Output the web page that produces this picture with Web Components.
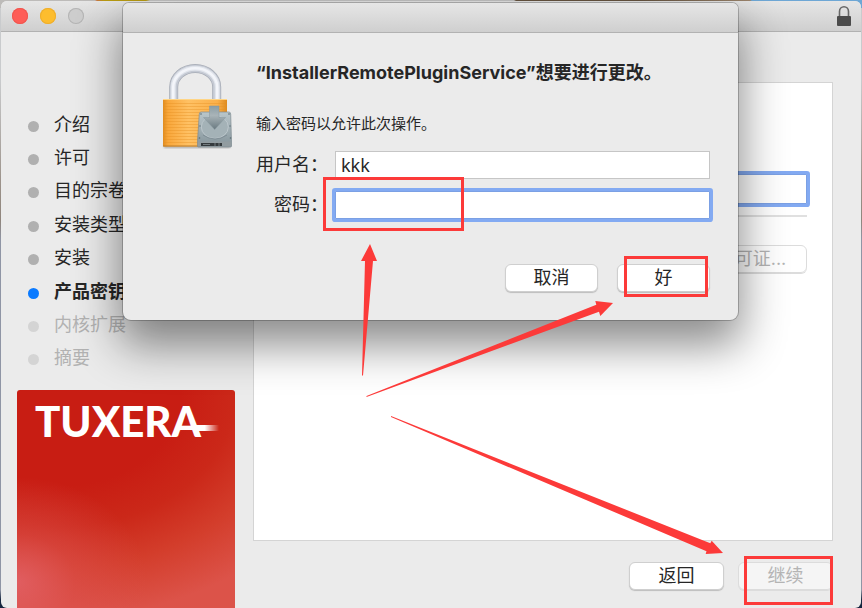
<!DOCTYPE html>
<html lang="zh-CN">
<head>
<meta charset="utf-8">
<title>安装器</title>
<style>
html, body { margin: 0; height: 100%; }
body {
  overflow: hidden;
  font-family: Inter, "Noto Sans CJK SC", sans-serif;
  font-size: 18px;
  color: #262626;
}
</style>
</head>
<body>
<installer-screen></installer-screen>
<script>
function define(name, html, setup) {
  const template = document.createElement('template');
  template.innerHTML = html;
  customElements.define(name, class extends HTMLElement {
    constructor() {
      super();
      this.attachShadow({ mode: 'open' }).append(template.content.cloneNode(true));
    }
    connectedCallback() { if (setup) setup(this, this.shadowRoot); }
  });
}

define('push-button', `
<style>
:host { display: block; min-width: 93px; }
button {
  display: block; box-sizing: border-box; width: 100%; height: 28px; padding: 0 17px;
  border: 1px solid #cfcfcf; border-radius: 6px; background: #fff;
  box-shadow: 0 1px 1px #bdbdbd;
  font: inherit; line-height: 26px; color: inherit; white-space: nowrap;
}
button:disabled { background: rgba(255,255,255,.5); color: #b4b4b4; border-color: #dcdcdc; box-shadow: 0 1px 0 #dcdcdc; }
</style>
<button type="button"><slot></slot></button>`, (host, root) => {
  root.querySelector('button').disabled = host.hasAttribute('disabled');
});

define('text-field', `
<style>
:host { display: grid; grid-template-columns: var(--label-width, auto) minmax(0, 1fr); column-gap: 7px; align-items: center; }
label { text-align: right; white-space: nowrap; line-height: 28px; }
label:empty { display: none; }
input {
  box-sizing: border-box; width: 100%; height: var(--field-height, 28px); padding: 0 5px; margin: 0;
  border: 1px solid #c6c6c6; border-radius: 0; background: #fff; outline: 0;
  font: 18px/24px "Noto Sans", "Noto Sans CJK SC", sans-serif; color: #262626;
}
:host([ring]) input { border-color: #7ba0e4; box-shadow: 0 0 0 3px #83aaf2; border-radius: 1px; }
:host([bare]) { grid-template-columns: minmax(0, 1fr); }
</style>
<label for="field"></label><input id="field">`, (host, root) => {
  const input = root.querySelector('input');
  root.querySelector('label').textContent = host.getAttribute('label') || '';
  input.type = host.getAttribute('type') || 'text';
  input.value = host.getAttribute('value') || '';
  if (host.hasAttribute('bare')) input.setAttribute('aria-label', host.getAttribute('name'));
});

define('title-bar', `
<style>
:host {
  display: flex; align-items: center; box-sizing: border-box; height: var(--bar-height, 30px);
  background: linear-gradient(#e6e6e6, #cfcfcf); border-bottom: 1px solid #b2b2b2;
}
</style><slot></slot>`);

define('window-controls', `
<style>
:host { display: flex; gap: 12px; padding-left: 11px; }
button { width: 16px; height: 16px; padding: 0; border: 0; border-radius: 50%; background: #fe5d57; box-shadow: 0 0 0 1px #f0564f inset; }
button:nth-of-type(2) { background: #fdbd2e; box-shadow: 0 0 0 1px #eeae2c inset; }
button:nth-of-type(3) { background: #cdcdcd; box-shadow: 0 0 0 1px #b4b4b4 inset; }
</style>
<button type="button" aria-label="关闭"></button><button type="button" aria-label="最小化"></button><button type="button" aria-label="缩放" disabled></button>`);

define('title-lock', `
<style>:host { display: block; margin-left: auto; padding-right: 10px; } svg { display: block; }</style>
<svg width="14" height="20" viewBox="0 0 14 20" aria-hidden="true">
  <path d="M2.500 11V5.500a4.500 4.700 0 0 1 9 0V11" fill="none" stroke="#666" stroke-width="1.600"/>
  <rect y="10" width="14" height="10" rx="1" fill="#4b4b4b"/>
</svg>`);

define('install-step', `
<style>
:host { display: flex; align-items: center; gap: 15px; flex: 1; white-space: nowrap; line-height: 24px; }
i { width: 11px; height: 11px; margin-top: 3px; border-radius: 50%; background: #b0b0b0; flex: none; }
:host([current]) { font-weight: 700; }
:host([current]) i { background: #0a7aff; }
:host([pending]) { color: #b2b2b2; }
:host([pending]) i { background: #d4d4d4; }
</style><i></i><span><slot></slot></span>`);

define('step-list', `
<style>:host { display: flex; flex-direction: column; min-height: 267px; padding-left: 11px; }</style><slot></slot>`);

define('brand-card', `
<style>
:host {
  display: block; flex: 1; border-radius: 3px 3px 0 0; padding: 5px 0 0 18px; overflow: hidden;
  background:
    radial-gradient(ellipse 130px 105px at 0 88%, rgba(226,98,104,.85), rgba(222,84,84,.45) 45%, rgba(220,80,70,0)),
    radial-gradient(ellipse 300px 228px at 20% 2%, #c81d13 40%, #cb2819 58%, #d33d2b 76%, #dc5349 98%);
}
.logo { position: relative; display: inline-block; font: 900 42px/52px Lato, sans-serif; color: #fff; }
.logo::after {
  content: ""; position: absolute; left: calc(100% - 8px); top: 30px; width: 26px; height: 6px;
  background: linear-gradient(90deg, #fff 45%, rgba(255,255,255,0));
}
</style><span class="logo"><slot></slot></span>`);

define('key-panel', `
<style>
:host { display: block; background: #fff; border: 1px solid #d4d4d4; padding: 91px 25px 0; }
hr { border: 0; height: 2px; background: #e0e0e0; margin: 11px 0 28px; }
text-field { --field-height: 30px; margin-left: 200px; }
.end { display: flex; justify-content: flex-end; }
</style>
<text-field bare ring name="产品密钥"></text-field>
<hr>
<div class="end"><push-button disabled>可证...</push-button></div>`);

define('lock-badge', `
<style>:host { display: block; } svg { display: block; }</style>
<svg width="85" height="100" viewBox="0 0 85 100" role="img" aria-label="锁">
  <defs>
    <linearGradient id="body" x2="1"><stop stop-color="#e08c20"/><stop offset=".08" stop-color="#f9a73b"/><stop offset=".4" stop-color="#ffc164"/><stop offset=".85" stop-color="#fbb04a"/><stop offset="1" stop-color="#de8b20"/></linearGradient>
    <linearGradient id="disk" x2="0" y2="1"><stop stop-color="#b9c6ca"/><stop offset="1" stop-color="#84939a"/></linearGradient>
    <linearGradient id="arrow" x2="0" y2="1"><stop stop-color="#8b9da4"/><stop offset=".4" stop-color="#a9b4b8"/><stop offset="1" stop-color="#697980"/></linearGradient>
    <pattern id="ribs" width="4" height="3" patternUnits="userSpaceOnUse"><rect width="4" height="1" fill="#e48f20" opacity=".38"/></pattern>
    <filter id="soft"><feGaussianBlur stdDeviation="1"/></filter>
  </defs>
  <path d="M18.700 46V32a21.500 18.500 0 0 1 43 0V46" fill="none" stroke="#a6abb5" stroke-width="9"/>
  <path d="M18.700 46V32a21.500 18.500 0 0 1 43 0V46" fill="none" stroke="#c4c9d3" stroke-width="7.600"/>
  <path d="M18.200 46V32a22 18.800 0 0 1 44 0V46" fill="none" stroke="#e0e4eb" stroke-width="5"/>
  <path d="M18.200 46V32a22 18.800 0 0 1 44 0V46" fill="none" stroke="#f3f5fa" stroke-width="2.500"/>
  <rect x="9" y="89" width="66" height="4" fill="#777" opacity=".55" filter="url(#soft)"/>
  <rect x="8" y="44" width="64" height="47.500" rx="1" fill="url(#body)"/>
  <rect x="8" y="46" width="64" height="44" fill="url(#ribs)"/>
  <path d="M8 44.500h64" stroke="#ffd585"/><path d="M8 91h64" stroke="#bd7c28"/>
  <path d="M46 57h28q1.500 0 1.700 2L76.500 86v5q0 1-1 1H43.500q-1 0-1-1v-5L44.300 59q.2-2 1.700-2z" fill="url(#disk)" stroke="#7e8b90" stroke-width=".7"/>
  <ellipse cx="59.800" cy="72" rx="13.500" ry="11.500" fill="#a4b2b7" stroke="#c1ccd0" stroke-width=".8"/>
  <path d="M48 80q12 8 24 0" fill="none" stroke="#77878e" stroke-width=".8"/>
  <path d="M43 86.500h33v5H43z" fill="#929ca0"/><path d="M46 88h21v3H46z" fill="#353a3d"/><path d="M48 89.500h7M60 88v3M64 88v3" stroke="#737b7e"/>
  <g fill="#596a72"><circle cx="46" cy="59" r=".8"/><circle cx="74" cy="59" r=".8"/><circle cx="45" cy="71" r=".7"/><circle cx="75" cy="71" r=".7"/><circle cx="44.500" cy="83" r=".8"/><circle cx="75.500" cy="83" r=".8"/></g>
  <path d="M54.500 51h9.500v11.500h6.500L59.700 74.500 48.500 62.500h6z" fill="url(#arrow)" stroke="#86969c" stroke-width=".5"/>
</svg>`);

define('auth-dialog', `
<style>
:host {
  display: block; border-radius: 6px 6px 8px 8px; background: #ebebeb; overflow: hidden;
  box-shadow: 0 0 0 1px rgba(0,0,0,.22), 0 22px 45px 3px rgba(0,0,0,.46);
}
.body { display: grid; grid-template-columns: 85px minmax(0, 1fr); column-gap: 16px; padding: 22px 28px 28px 32px; }
h1 { margin: 6px 0 29px; font-size: 18px; font-weight: 700; line-height: 24px; white-space: nowrap; }
p { margin: 0 0 17px; font-size: 15px; line-height: 20px; }
form { display: grid; row-gap: 12px; --label-width: 72px; margin: 0; }
.actions { display: flex; justify-content: flex-end; gap: 19px; margin-top: 45px; }
</style>
<title-bar></title-bar>
<div class="body">
  <lock-badge></lock-badge>
  <div>
    <h1>“InstallerRemotePluginService”想要进行更改。</h1>
    <p>输入密码以允许此次操作。</p>
    <form>
      <text-field label="用户名：" value="kkk"></text-field>
      <text-field label="密码：" type="password" ring></text-field>
    </form>
    <div class="actions"><push-button>取消</push-button><push-button>好</push-button></div>
  </div>
</div>`);

define('red-marks', `
<style>:host { display: block; pointer-events: none; } svg { display: block; }</style>
<svg width="862" height="608" viewBox="0 0 862 608" aria-hidden="true">
  <g fill="none" stroke="#fc3a39" stroke-width="3">
    <rect x="324.500" y="178.500" width="138" height="51"/>
    <rect x="625.500" y="257.500" width="81" height="38"/>
    <rect x="745.500" y="557.500" width="86" height="46"/>
  </g>
  <g fill="#fc3a39">
    <path d="M370 244l7 17h-4L363 375.500h-1L365 261h-4z"/>
    <path d="M613 303l-12.700 13-1.300-4.300L366.500 397v-1L596.300 304.700l-1-3.700z"/>
    <path d="M723 553l-17.300 1 .8-2.700L391 417v-1l319.300 127.300 1.400-2.600z"/>
  </g>
</svg>`);

define('installer-window', `
<style>
:host { display: flex; flex-direction: column; border-radius: 6px; overflow: hidden; background: #ebebeb; --bar-height: 31px; }
.body { flex: 1; display: grid; grid-template-columns: 218px minmax(0, 1fr); column-gap: 18px; padding: 0 28px 0 16px; }
aside { display: flex; flex-direction: column; gap: 15px; padding-top: 76px; }
main { display: flex; flex-direction: column; padding: 50px 0 18px; }
key-panel { flex: 1; }
footer { display: flex; justify-content: flex-end; gap: 14px; padding-top: 21px; }
footer push-button { width: 95px; }
</style>
<title-bar><window-controls></window-controls><title-lock></title-lock></title-bar>
<div class="body">
  <aside>
    <step-list>
      <install-step>介绍</install-step><install-step>许可</install-step>
      <install-step>目的宗卷</install-step><install-step>安装类型</install-step>
      <install-step>安装</install-step><install-step current>产品密钥</install-step>
      <install-step pending>内核扩展</install-step><install-step pending>摘要</install-step>
    </step-list>
    <brand-card>TUXERA</brand-card>
  </aside>
  <main>
    <key-panel></key-panel>
    <footer><push-button>返回</push-button><push-button disabled>继续</push-button></footer>
  </main>
</div>`);

define('installer-screen', `
<style>
:host {
  position: relative; display: grid; box-sizing: border-box; min-height: 100vh; padding: 1px 1px 0;
  background:
    linear-gradient(90deg, #bdbbb9 95px, #c9763f 97px, #b89b12 104px 146px, #c4c4c4 150px 514px, #665440 516px 640px, #9b846c 750px, #6ea7d5 752px) top / 100% 8px no-repeat,
    linear-gradient(#c9cbcd 80px, #9d948c 180px, #8f857c 220px, #8f95a5 240px 590px, #16263f 600px);
}
auth-dialog { position: absolute; left: 123px; right: 124px; top: 3px; }
red-marks { position: absolute; left: 0; top: 0; }
</style>
<installer-window></installer-window>
<auth-dialog></auth-dialog>
<red-marks></red-marks>`);
</script>
</body>
</html>
